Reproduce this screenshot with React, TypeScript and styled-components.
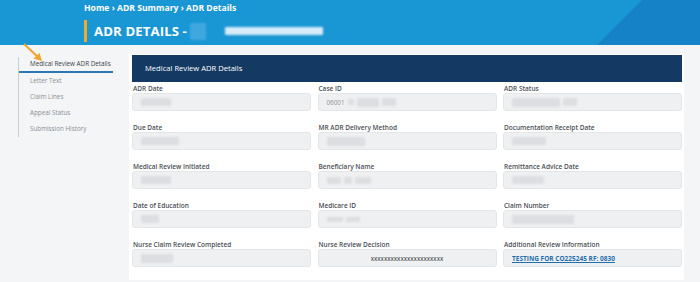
import styled, { createGlobalStyle } from "styled-components";

const GlobalStyle = createGlobalStyle`
  html, body {
    margin: 0;
    padding: 0;
    background: #f4f5f6;
    font-family: "Open Sans", "Liberation Sans", sans-serif;
  }
`;

const Page = styled.div`
  width: 700px;
  height: 282px;
  overflow: hidden;
  position: relative;
`;

const Header = styled.header`
  position: relative;
  height: 45px;
  background: #1996d4;
  padding-left: 84px;
  box-sizing: border-box;
  overflow: hidden;

  &::after {
    content: "";
    position: absolute;
    inset: 0;
    background: #1582c8;
    clip-path: polygon(642px 0, 700px 0, 700px 45px, 597px 45px);
  }
`;

const Crumbs = styled.div`
  position: relative;
  z-index: 1;
  padding-top: 2px;
  color: #fff;
  font-weight: 700;
  font-size: 8.6px;
  line-height: 12px;
`;

const TitleRow = styled.div`
  position: relative;
  z-index: 1;
  display: flex;
  align-items: center;
  margin-top: 6px;
  height: 22px;
  border-left: 3px solid #f2aa2e;
  padding-left: 7px;
`;

const Title = styled.h1`
  margin: 0;
  color: #fff;
  font-size: 13.2px;
  font-weight: 700;
  letter-spacing: 0.1px;
`;

const Smudge = styled.span<{ w: number; h: number; c: string; ml: number }>`
  display: inline-block;
  width: ${(p) => p.w}px;
  height: ${(p) => p.h}px;
  margin-left: ${(p) => p.ml}px;
  background: ${(p) => p.c};
  filter: blur(1px);
  border-radius: 1px;
`;

const Body = styled.div`
  display: flex;
  padding-top: 9px;
`;

const Side = styled.nav`
  position: relative;
  width: 129px;
  padding-left: 18px;
  box-sizing: border-box;
  padding-top: 3px;
`;

const NavList = styled.ul`
  list-style: none;
  margin: 0;
  padding: 0;
  width: 94px;
  border-left: 1px solid #c9cdd1;
`;

const NavItem = styled.li<{ active?: boolean }>`
  height: ${(p) => (p.active ? 14 : 16)}px;
  line-height: ${(p) => (p.active ? 14 : 16)}px;
  padding-left: 11px;
  font-size: 6.3px;
  white-space: nowrap;
  color: ${(p) => (p.active ? "#3c4248" : "#8b9096")};
  border-bottom: ${(p) => (p.active ? "2px solid #2d78b4" : "none")};
`;

const Arrow = styled.svg`
  position: absolute;
  left: 21px;
  top: -12px;
`;

const Card = styled.section`
  width: 555px;
  background: #fff;
  padding: 1px 2px 11px 3px;
  box-sizing: border-box;
  height: 226px;
`;

const CardHead = styled.div`
  height: 27px;
  background: #143a63;
  color: #fff;
  font-size: 7.6px;
  line-height: 27px;
  padding-left: 13px;
`;

const Grid = styled.div`
  display: grid;
  grid-template-columns: repeat(3, 1fr);
  column-gap: 6.5px;
  row-gap: 12px;
  padding-top: 2px;
`;

const Field = styled.div`
  display: flex;
  flex-direction: column;
`;

const Label = styled.label`
  height: 9px;
  line-height: 9px;
  font-size: 6.5px;
  font-weight: 600;
  color: #4a4f55;
  padding-left: 1px;
  white-space: nowrap;
`;

const Input = styled.div<{ center?: boolean }>`
  height: 18px;
  box-sizing: border-box;
  background: #eff0f1;
  border: 1px solid #e3e5e7;
  border-radius: 3px;
  display: flex;
  align-items: center;
  justify-content: ${(p) => (p.center ? "center" : "flex-start")};
  padding-left: ${(p) => (p.center ? 0 : 8)}px;
  font-size: 6.3px;
  color: #8d9196;
  gap: 3px;
`;

const Value = styled.span`
  color: #30343a;
  font-size: 6.3px;
`;

const LinkText = styled.a`
  color: #1f6fae;
  font-weight: 700;
  font-size: 6.5px;
  text-decoration: underline;
`;

type Blob = [number, number];

const fields: { label: string; blobs?: Blob[]; text?: string; center?: boolean; link?: string }[] = [
  { label: "ADR Date", blobs: [[30, 8]] },
  { label: "Case ID", text: "06001", blobs: [[6, 6], [22, 9], [14, 8]] },
  { label: "ADR Status", blobs: [[48, 9], [14, 8]] },
  { label: "Due Date", blobs: [[38, 8]] },
  { label: "MR ADR Delivery Method", blobs: [[38, 9]] },
  { label: "Documentation Receipt Date", blobs: [[34, 8]] },
  { label: "Medical Review Initiated", blobs: [[30, 8]] },
  { label: "Beneficiary Name", blobs: [[14, 7], [8, 7], [16, 7]] },
  { label: "Remittance Advice Date", blobs: [[32, 8]] },
  { label: "Date of Education", blobs: [[18, 8]] },
  { label: "Medicare ID", blobs: [[16, 5], [14, 5]] },
  { label: "Claim Number", blobs: [[62, 9]] },
  { label: "Nurse Claim Review Completed", blobs: [[32, 9]] },
  { label: "Nurse Review Decision", text: "xxxxxxxxxxxxxxxxxxxxxx", center: true },
  { label: "Additional Review Information", link: "TESTING FOR CO225245 RF: 0830" },
];

const navItems = ["Letter Text", "Claim Lines", "Appeal Status", "Submission History"];

export default function App() {
  return (
    <Page>
      <GlobalStyle />
      <Header>
        <Crumbs>Home › ADR Summary › ADR Details</Crumbs>
        <TitleRow>
          <Title>ADR DETAILS -</Title>
          <Smudge w={16} h={17} c="#3ea8de" ml={3} />
          <Smudge w={98} h={8} c="#d7ecf8" ml={19} />
        </TitleRow>
      </Header>
      <Body>
        <Side>
          <Arrow width="24" height="22" viewBox="0 0 24 22">
            <line x1="3" y1="2" x2="18" y2="16" stroke="#f0a52a" strokeWidth="2" />
            <path d="M21 19 L12.5 16.5 L18.5 11 Z" fill="#f0a52a" />
          </Arrow>
          <NavList>
            <NavItem active>Medical Review ADR Details</NavItem>
            {navItems.map((n) => (
              <NavItem key={n}>{n}</NavItem>
            ))}
          </NavList>
        </Side>
        <Card>
          <CardHead>Medical Review ADR Details</CardHead>
          <Grid>
            {fields.map((f) => (
              <Field key={f.label}>
                <Label>{f.label}</Label>
                <Input center={f.center}>
                  {f.link ? (
                    <LinkText href="#">{f.link}</LinkText>
                  ) : f.center ? (
                    <Value>{f.text}</Value>
                  ) : (
                    f.text
                  )}
                  {f.blobs?.map(([w, h], i) => (
                    <Smudge key={i} w={w} h={h} c="#dcdee1" ml={0} />
                  ))}
                </Input>
              </Field>
            ))}
          </Grid>
        </Card>
      </Body>
    </Page>
  );
}
